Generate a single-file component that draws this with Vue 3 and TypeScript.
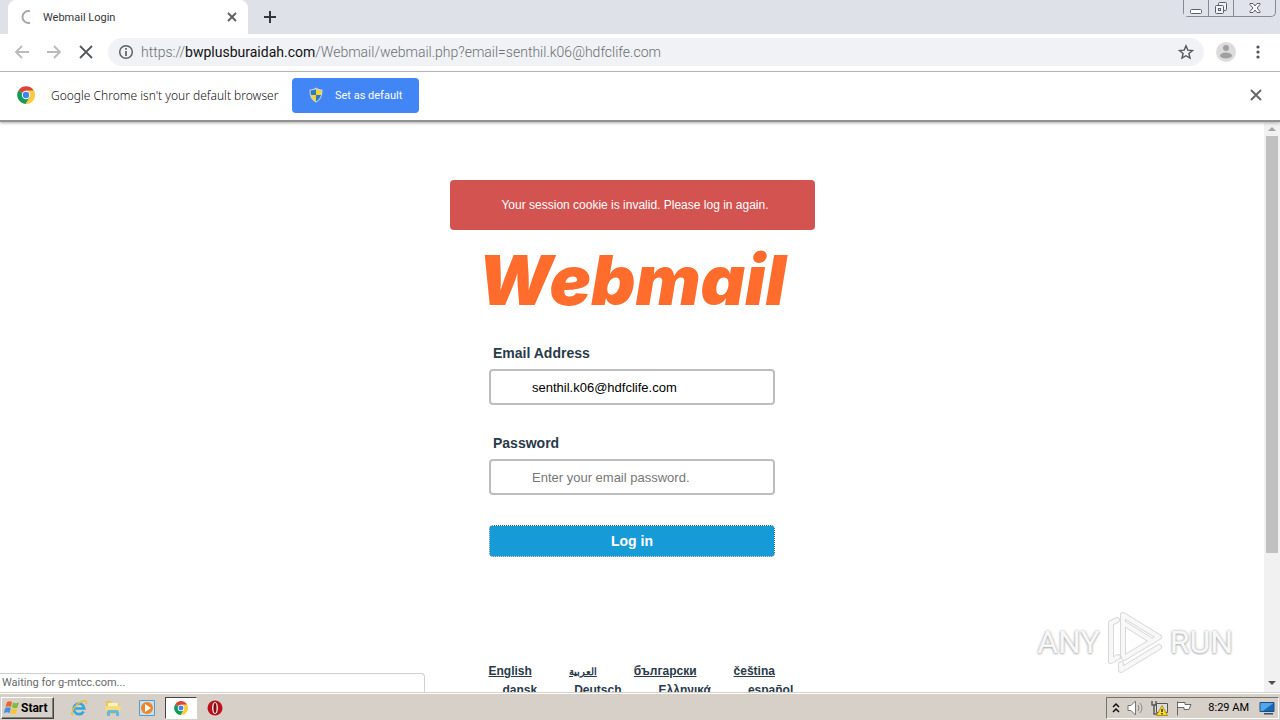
<script setup lang="ts">
import { ref } from 'vue'

const email = ref('senthil.k06@hdfclife.com')
const password = ref('')
const url = ref({ scheme: 'https://', host: 'bwplusburaidah.com', path: '/Webmail/webmail.php?email=senthil.k06@hdfclife.com' })

interface Locale { code: string; name: string }
const localeRows: Locale[][] = [
  [{ code: 'en', name: 'English' }, { code: 'ar', name: 'العربية' }, { code: 'bg', name: 'български' }, { code: 'cs', name: 'čeština' }],
  [{ code: 'da', name: 'dansk' }, { code: 'de', name: 'Deutsch' }, { code: 'el', name: 'Ελληνικά' }, { code: 'es', name: 'español' }],
]
</script>

<template>
  <div class="desktop">
    <header class="tabstrip">
      <div class="tab">
        <svg class="spinner" width="16" height="16" viewBox="0 0 16 16"><path d="M11 2.200A6 6 0 1 0 11 13.800" fill="none" stroke="#a8a8a8" stroke-width="2" /></svg>
        <span class="tab-title">Webmail Login</span>
        <button class="plain" aria-label="Close tab">
          <svg width="12" height="12" viewBox="0 0 12 12"><path d="M2 2l8 8M10 2l-8 8" stroke="#5a5d60" stroke-width="1.8" /></svg>
        </button>
      </div>
      <button class="plain new-tab" aria-label="New tab">
        <svg width="14" height="14" viewBox="0 0 14 14"><path d="M7 1v12M1 7h12" stroke="#34373a" stroke-width="2" /></svg>
      </button>
      <div class="window-buttons">
        <button aria-label="Minimize"><svg width="14" height="14" viewBox="0 0 14 14"><rect x="1.5" y="8.5" width="11" height="4" rx="1" fill="#fff" stroke="#5a5f69" /></svg></button>
        <button aria-label="Restore"><svg width="14" height="14" viewBox="0 0 14 14"><g fill="#f1f2f5" stroke="#5a5f69"><rect x="4.500" y="1.500" width="8" height="8" rx="1" /><rect x="1.500" y="4.500" width="8" height="8" rx="1" /><rect x="4.500" y="7.500" width="2" height="2" /></g></svg></button>
        <button class="wide" aria-label="Close"><svg width="14" height="14" viewBox="0 0 14 14"><path d="M2 2.500h3l2 2.500 2-2.500h3v1L9 7l3 3.500v1H9L7 9l-2 2.500H2v-1L5 7 2 3.500z" fill="#fff" stroke="#5a5f69" /></svg></button>
      </div>
    </header>

    <nav class="toolbar">
      <button class="plain" aria-label="Back"><svg width="16" height="16" viewBox="0 0 16 16"><path d="M15 8H2M8 2L2 8l6 6" fill="none" stroke="#b9babc" stroke-width="1.8" /></svg></button>
      <button class="plain" aria-label="Forward"><svg width="16" height="16" viewBox="0 0 16 16"><path d="M1 8h13M8 2l6 6-6 6" fill="none" stroke="#b9babc" stroke-width="1.8" /></svg></button>
      <button class="plain" aria-label="Stop"><svg width="16" height="16" viewBox="0 0 16 16"><path d="M2 2l12 12M14 2L2 14" stroke="#55585c" stroke-width="1.800" /></svg></button>
      <div class="omnibox">
        <svg width="16" height="16" viewBox="0 0 16 16"><circle cx="8" cy="8" r="6.300" fill="none" stroke="#5c6064" stroke-width="1.500" /><path d="M8 7v5M8 4v1.700" stroke="#5c6064" stroke-width="1.700" /></svg>
        <div class="url">{{ url.scheme }}<b>{{ url.host }}</b>{{ url.path }}</div>
        <button class="plain" aria-label="Bookmark this page"><svg width="16" height="16" viewBox="0 0 16 16"><path d="M8 1.800l1.800 4.300 4.700.4-3.600 3 1.100 4.600L8 11.700l-4 2.400 1.100-4.600-3.600-3 4.700-.4z" fill="none" stroke="#55585c" stroke-width="1.400" /></svg></button>
      </div>
      <button class="plain avatar" aria-label="Profile"><svg width="20" height="20" viewBox="0 0 20 20"><circle cx="10" cy="10" r="10" fill="#dcdcdc" /><circle cx="10" cy="6" r="3" fill="#a0a0a0" /><ellipse cx="10" cy="13.500" rx="6" ry="3" fill="#a0a0a0" /></svg></button>
      <button class="plain" aria-label="Menu"><svg width="16" height="16" viewBox="0 0 16 16" fill="#505357"><circle cx="8" cy="3" r="1.600" /><circle cx="8" cy="8" r="1.600" /><circle cx="8" cy="13" r="1.600" /></svg></button>
    </nav>

    <section class="infobar">
      <svg width="18" height="18" viewBox="0 0 18 18"><path d="M9 9L1.400 4.500A9 9 0 0 1 16.800 4.500z" fill="#db4437" /><path d="M9 9L1.400 4.500A9 9 0 0 0 8.700 18L13 11z" fill="#159b58" /><path d="M9 4.500h7.800A9 9 0 0 1 8.700 18L13 11z" fill="#fbcc3c" /><circle cx="9" cy="9" r="4.200" fill="#fff" /><circle cx="9" cy="9" r="3.200" fill="#4284ef" /></svg>
      <span class="info-text">Google Chrome isn't your default browser</span>
      <button class="default-btn">
        <svg width="14" height="16" viewBox="0 0 14 16"><path d="M7 .5c2 1.500 4 2 6.500 2C13.500 9 12 13 7 15.500 2 13 .5 9 .5 2.500 3 2.500 5 2 7 .5z" fill="#c9d7df" /><path d="M7 2v6H2C1.700 6.500 1.500 5 1.500 3.500 4 3.300 5.500 3 7 2zM7 8h5c-.8 3-2.200 5-5 6.400z" fill="#3277c8" /><path d="M7 2c1.500 1 3 1.300 5.500 1.500 0 1.500-.2 3-.5 4.500H7zM7 8v6.400C4.200 13 2.800 11 2 8z" fill="#f4d52f" /></svg>
        Set as default
      </button>
      <button class="plain info-close" aria-label="Dismiss"><svg width="12" height="12" viewBox="0 0 12 12"><path d="M1 1l10 10M11 1L1 11" stroke="#66696c" stroke-width="2" /></svg></button>
    </section>

    <div class="viewport">
      <main class="page">
        <div class="alert" role="alert">Your session cookie is invalid. Please log in again.</div>
        <h1 class="logo">Webmail</h1>
        <form class="login" @submit.prevent>
          <label for="email">Email Address</label>
          <input id="email" v-model="email" type="text">
          <label for="password">Password</label>
          <input id="password" v-model="password" type="password" placeholder="Enter your email password.">
          <button type="submit">Log in</button>
        </form>
        <div class="locales">
          <div v-for="(row, i) in localeRows" :key="i" class="locale-row">
            <a v-for="locale in row" :key="locale.code" href="#" :lang="locale.code">{{ locale.name }}</a>
          </div>
        </div>
      </main>
      <div class="scrollbar">
        <svg width="16" height="14" viewBox="0 0 16 14"><path d="M4 9l4-4 4 4z" fill="#a3a3a3" /></svg>
        <div class="track"><div class="thumb"></div></div>
        <svg width="16" height="18" viewBox="0 0 16 18"><path d="M4 7l4 4 4-4z" fill="#505050" /></svg>
      </div>
      <div class="status">Waiting for g-mtcc.com...</div>
      <div class="watermark">
        <span>ANY</span>
        <svg width="56" height="64" viewBox="0 0 56 64" fill="none" stroke-linejoin="round" stroke-linecap="round"><g stroke="#d8d8d8" stroke-width="6"><path d="M16 45V5l36 22-35 21M18 14l27 17M10 10l-6 3v38l7-4M14 54v6l38-23" /></g><g stroke="#f8f8f8" stroke-width="4"><path d="M16 45V5l36 22-35 21M18 14l27 17M10 10l-6 3v38l7-4M14 54v6l38-23" /></g></svg>
        <span>RUN</span>
      </div>
    </div>

    <footer class="taskbar">
      <button class="start">
        <svg width="16" height="16" viewBox="0 0 16 16"><path d="M3 2c2-1 3-1 5 0L7 7C5 6 4 6 1.500 7z" fill="#ef622b" /><path d="M9 2.500c2 1 3 1 6 0L13.500 7.500c-2 1-3.500 1-5.500 0z" fill="#7fbc42" /><path d="M1.300 8c2-1 3.500-1 5.500 0l-1 5c-2-1-3.500-1-6 0z" fill="#3f93df" /><path d="M7.800 8.500c2 1 3.500 1 5.500 0l-1.500 5c-2 1-3.500 1-5.300 0z" fill="#fbc52f" /></svg>
        Start
      </button>
      <div class="quick">
        <button class="task" aria-label="Internet Explorer"><svg width="18" height="18" viewBox="0 0 18 18"><path d="M4.500 9.500h9.800A5.300 5.300 0 1 0 13.600 12.500" fill="none" stroke="#35a7df" stroke-width="2.600" /><path d="M3 16C-1 15 6 4 13 2c4-1 4 1 3 3" fill="none" stroke="#e9bd3c" stroke-width="1.400" /></svg></button>
        <button class="task" aria-label="File Explorer"><svg width="18" height="18" viewBox="0 0 18 18"><path d="M2 2h5l1 2h7v11H2z" fill="#e8c65a" /><path d="M4 4h10v5H4z" fill="#fff3b4" /><path d="M1 7h16l-1 6H2z" fill="#f6dc80" /><path d="M3 17v-4q0-2 2-2h8q2 0 2 2v4h-3v-3H6v3z" fill="#66b9df" /></svg></button>
        <button class="task" aria-label="Media Player"><svg width="18" height="18" viewBox="0 0 18 18"><path d="M1.500 1.500h15v15h-15z" fill="#c6e1f2" stroke="#5a9ac4" /><circle cx="9" cy="9" r="6" fill="#ef8524" /><path d="M7 5l6 4-6 4z" fill="#fff" /></svg></button>
        <button class="task active" aria-label="Chrome"><svg width="14" height="14" viewBox="0 0 18 18"><path d="M9 9L1.400 4.500A9 9 0 0 1 16.800 4.500z" fill="#db4437" /><path d="M9 9L1.400 4.500A9 9 0 0 0 8.700 18L13 11z" fill="#159b58" /><path d="M9 4.500h7.800A9 9 0 0 1 8.700 18L13 11z" fill="#fbcc3c" /><circle cx="9" cy="9" r="4.200" fill="#fff" /><circle cx="9" cy="9" r="3.200" fill="#4284ef" /></svg></button>
        <button class="task" aria-label="Opera"><svg width="16" height="16" viewBox="0 0 16 16"><circle cx="8" cy="8" r="7.500" fill="#b81118" /><ellipse cx="8" cy="8" rx="3" ry="6" fill="#f4e6e4" /><ellipse cx="8" cy="8" rx="1.500" ry="5" fill="#87070e" /></svg></button>
      </div>
      <div class="tray">
        <svg width="10" height="12" viewBox="0 0 10 12"><path d="M2 5l3-3 3 3M2 10l3-3 3 3" fill="none" stroke="#111" stroke-width="1.500" /></svg>
        <svg width="18" height="16" viewBox="0 0 18 16"><path d="M1 5.500h3L8.500 1v14L4 10.500H1z" fill="#fff" stroke="#777" /><path d="M11 5q2 3 0 6M13 3q4 5 0 10" fill="none" stroke="#888" /></svg>
        <svg width="18" height="16" viewBox="0 0 18 16"><path d="M5.500 3.500h11v9h-11z" fill="#d9dddd" stroke="#555" /><path d="M1 1v4h4V1M3 5v9h3" fill="none" stroke="#555" stroke-width="1.400" /><path d="M11 5.500l5.500 10h-11z" fill="#f9dd2b" stroke="#b59110" /><path d="M11 9v3M11 13v1.500" stroke="#222" stroke-width="1.400" /></svg>
        <svg width="18" height="16" viewBox="0 0 18 16"><path d="M2.500 15.500v-14M3 2.500h7v2h6l-2 5H9v-2H3" fill="#fff" stroke="#666" /></svg>
        <time>8:29 AM</time>
        <svg width="16" height="14" viewBox="0 0 16 14"><path d="M1 1.500h14v9H1z" fill="#1768bd" stroke="#204c7b" /><path d="M1.500 2h13L4 10H1.500z" fill="#51a7e8" /><path d="M5 12h9v1.500H5z" fill="#31506e" /></svg>
      </div>
    </footer>
  </div>
</template>

<style>
body { margin: 0; overflow: hidden; }
</style>

<style scoped>
* { box-sizing: border-box; }
svg { display: block; flex: none; }
button { font: inherit; padding: 0; border: 0; }
.desktop { height: 100vh; display: flex; flex-direction: column; background: #fff; font-family: Roboto, Tahoma, sans-serif; font-size: 11px; overflow: hidden; }
.plain { background: none; display: flex; align-items: center; justify-content: center; flex: none; }

.tabstrip { height: 34px; background: #dee1e7; display: flex; flex: none; padding-left: 8px; }
.tab { width: 240px; background: #fff; border-radius: 8px 8px 0 0; display: flex; align-items: center; gap: 8px; padding: 0 10px 0 11px; color: #34363a; }
.tab-title { flex: 1; white-space: nowrap; }
.new-tab { width: 28px; margin-left: 8px; }
.window-buttons { margin-left: auto; height: 17px; display: flex; border: 1px solid #858a96; border-top: 0; border-radius: 0 0 5px 5px; margin-right: 4px; }
.window-buttons button { width: 25px; display: flex; align-items: center; justify-content: center; background: #e0e3e9; border-right: 1px solid #858a96; }
.window-buttons .wide { width: 41px; border-right: 0; border-radius: 0 0 5px 5px; }

.toolbar { height: 38px; flex: none; display: flex; align-items: center; gap: 16px; padding: 0 14px 1px; border-bottom: 1px solid #b5b6b8; }
.omnibox { flex: 1; min-width: 0; height: 28px; margin-left: -2px; border-radius: 14px; background: #f0f2f5; display: flex; align-items: center; gap: 7px; padding: 0 10px; }
.url { flex: 1; color: #6b6f73; font-size: 14px; font-weight: 300; white-space: nowrap; overflow: hidden; }
.url b { color: #111; font-weight: 400; }
.avatar { margin: 0 -2px 0 -4px; }

.infobar { height: 50px; flex: none; display: flex; align-items: center; padding: 0 18px 2px 17px; border-bottom: 2px solid #929292; box-shadow: 0 1px 3px #aaa; z-index: 1; background: #fff; }
.info-text { margin-left: 16px; min-width: 229px; font-family: "Noto Sans", Tahoma, sans-serif; font-size: 12px; font-weight: 300; color: #111; white-space: nowrap; }
.default-btn { margin-left: 12px; width: 127px; height: 35px; border-radius: 4px; background: #4285f4; color: #fff; display: flex; align-items: center; gap: 12px; padding-left: 17px; }
.info-close { margin-left: auto; }

.viewport { flex: 1; min-height: 0; display: flex; position: relative; }
.page { flex: 1; min-width: 0; overflow: hidden; display: flex; flex-direction: column; align-items: center; padding-top: 58px; font-family: "Liberation Sans", Arial, sans-serif; }
.alert { width: 365px; max-width: 100%; padding: 16px 16px 16px 22px; border-radius: 4px; background: #d35351; color: #fff; font-size: 12px; line-height: 18px; text-align: center; flex: none; }
.logo { margin: 15px 0 0; height: 70px; line-height: 70px; color: #ff6c2c; font-family: Inter, "Liberation Sans", sans-serif; font-size: 69px; font-weight: 900; font-style: italic; flex: none; }
.login { width: 286px; display: flex; flex-direction: column; flex: none; margin-top: 28px; }
.login label { margin-left: 4px; font-size: 14px; font-weight: 700; line-height: 20px; color: #293a4a; margin-bottom: 6px; }
.login input { height: 36px; border: 2px solid #bebebe; border-radius: 4px; background: #fff; padding: 0 41px; font-family: inherit; font-size: 13px; color: #000; margin-bottom: 28px; outline: 0; }
.login input::placeholder { color: #777; opacity: 1; }
.login button { height: 32px; margin-top: 2px; border: 1px solid #136b9c; outline: 1px dotted #fff; outline-offset: -1px; border-radius: 4px; background: #179bd7; color: #fff; font-size: 14px; font-weight: 700; }
.locales { margin-top: 105px; width: 287px; font-size: 12px; font-weight: 700; line-height: 19px; flex: none; }
.locale-row { display: flex; gap: 37px; }
.locale-row + .locale-row { padding-left: 14px; }
.locale-row a { color: #293a4a; white-space: nowrap; }
.locale-row a:lang(ar) { font-size: 10px; }

.scrollbar { width: 16px; background: #f1f1f1; display: flex; flex-direction: column; }
.track { flex: 1; padding: 0 2px; }
.thumb { height: 77.5%; background: #c1c1c1; }
.status { position: absolute; left: 0; bottom: 0; width: 425px; height: 19px; border: 1px solid #d0d0d0; border-left: 0; border-bottom: 0; border-radius: 0 4px 0 0; background: #fff; color: #696969; line-height: 18px; padding-left: 2px; }
.watermark { position: absolute; right: 47px; bottom: 18px; display: flex; align-items: center; gap: 7px; font-size: 32px; color: #f8f8f8; text-shadow: 0 0 3px #aaa, 0 1px 2px #bbb; }

.taskbar { height: 28px; flex: none; z-index: 1; background: #d6d0c8; border-top: 1px solid #d6d0c8; box-shadow: inset 0 1px #fff; display: flex; align-items: center; padding: 3px 1px 1px; }
.start { width: 53px; height: 22px; display: flex; align-items: center; gap: 1px; padding-left: 2px; background: #d6d0c8; border: 1px solid; border-color: #fff #444 #444 #fff; box-shadow: inset -1px -1px #858078; font-size: 12px; font-weight: 700; color: #000; }
.quick { display: flex; margin-left: 9px; gap: 2px; }
.task { width: 32px; height: 22px; display: flex; align-items: center; justify-content: center; background: none; }
.active { background: #fff; border: 1px solid; border-color: #444 #fff #fff #444; }
.tray { margin-left: auto; height: 22px; display: flex; align-items: center; gap: 6px; padding: 0 3px 0 4px; border: 1px solid; border-color: #77736d #fff #fff #77736d; }
.tray time { color: #000; margin: 0 4px 0 9px; font-size: 11px; white-space: nowrap; }
</style>
